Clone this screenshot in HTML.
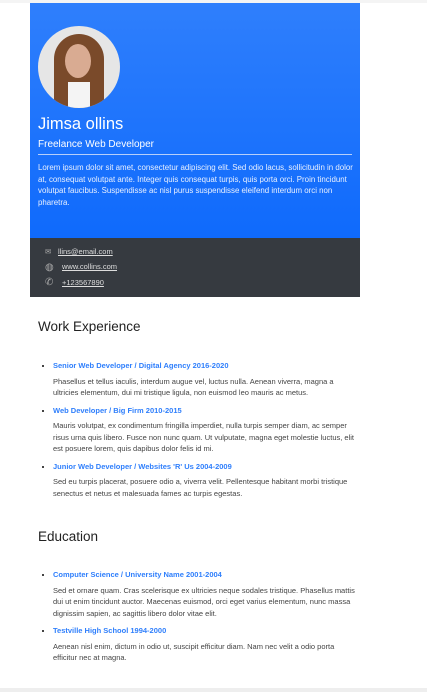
<!DOCTYPE html>
<html><head><meta charset="utf-8"><style>
body{margin:0;background:#fff;font-family:"Liberation Sans",sans-serif;width:427px;height:692px;overflow:hidden;position:relative}
.top{position:absolute;left:0;top:0;width:427px;height:3px;background:#f4f4f4}
.hdr{position:absolute;left:30px;top:3px;width:330px;height:235px;background:linear-gradient(#2f7ffc,#0f6afc);color:#fff}
.av{position:absolute;left:8px;top:23px;width:82px;height:82px;border-radius:50%;background:#e6e6e6;overflow:hidden}
.hair{position:absolute;left:16px;top:8px;width:50px;height:80px;border-radius:25px 25px 0 0;background:#7a4a2a}
.face{position:absolute;left:27px;top:18px;width:26px;height:34px;border-radius:50%;background:#d9ab92}
.neck{position:absolute;left:30px;top:56px;width:22px;height:30px;background:#f4f4f4}
.name{position:absolute;left:8px;top:112px;font-size:16.5px}
.sub{position:absolute;left:8px;top:136px;font-size:10px}
.hr{position:absolute;left:8px;top:151px;width:314px;height:1px;background:#b8cffa}
.desc{position:absolute;left:8px;top:159px;width:316px;font-size:7.9px;line-height:11.5px;color:#e8f0ff}
.ct{position:absolute;left:30px;top:238px;width:330px;height:59px;background:#363a40;color:#ddd;font-size:7.5px}
.ct div{position:absolute;left:32px;text-decoration:underline}
.ic{position:absolute;left:15px;color:#aaa}
h2{position:absolute;left:38px;margin:0;font-weight:normal;font-size:13.5px;color:#222}
ul{position:absolute;left:38px;width:303px;margin:0;padding:0 0 0 15px;font-size:7.5px;line-height:11.5px;color:#444}
li{list-style:square;margin-bottom:6px}
li b{display:block;font-weight:bold;color:#2f7ffc;margin-bottom:4px}
.bot{position:absolute;left:0;top:688px;width:427px;height:4px;background:#eee}
</style></head><body>
<div class="top"></div>
<div class="hdr">
<div class="av"><div class="hair"></div><div class="face"></div><div class="neck"></div></div>
<div class="name">Jimsa ollins</div>
<div class="sub">Freelance Web Developer</div>
<div class="hr"></div>
<div class="desc">Lorem ipsum dolor sit amet, consectetur adipiscing elit. Sed odio lacus, sollicitudin in dolor at, consequat volutpat ante. Integer quis consequat turpis, quis porta orci. Proin tincidunt volutpat faucibus. Suspendisse ac nisl purus suspendisse eleifend interdum orci non pharetra.</div>
</div>
<div class="ct">
<span class="ic" style="top:9px">✉</span><div style="top:9px;left:28px">llins@email.com</div>
<span class="ic" style="top:24px;font-size:10px">◍</span><div style="top:24px">www.collins.com</div>
<span class="ic" style="top:39px;font-size:10px">✆</span><div style="top:40px">+123567890</div>
</div>
<h2 style="top:319px">Work Experience</h2>
<ul style="top:360px">
<li><b>Senior Web Developer / Digital Agency 2016-2020</b>Phasellus et tellus iaculis, interdum augue vel, luctus nulla. Aenean viverra, magna a ultricies elementum, dui mi tristique ligula, non euismod leo mauris ac metus.</li>
<li><b>Web Developer / Big Firm 2010-2015</b>Mauris volutpat, ex condimentum fringilla imperdiet, nulla turpis semper diam, ac semper risus urna quis libero. Fusce non nunc quam. Ut vulputate, magna eget molestie luctus, elit est posuere lorem, quis dapibus dolor felis id mi.</li>
<li><b>Junior Web Developer / Websites 'R' Us 2004-2009</b>Sed eu turpis placerat, posuere odio a, viverra velit. Pellentesque habitant morbi tristique senectus et netus et malesuada fames ac turpis egestas.</li>
</ul>
<h2 style="top:529px">Education</h2>
<ul style="top:569px">
<li><b>Computer Science / University Name 2001-2004</b>Sed et ornare quam. Cras scelerisque ex ultricies neque sodales tristique. Phasellus mattis dui ut enim tincidunt auctor. Maecenas euismod, orci eget varius elementum, nunc massa dignissim sapien, ac sagittis libero dolor vitae elit.</li>
<li><b>Testville High School 1994-2000</b>Aenean nisl enim, dictum in odio ut, suscipit efficitur diam. Nam nec velit a odio porta efficitur nec at magna.</li>
</ul>
<div class="bot"></div>
</body></html>
